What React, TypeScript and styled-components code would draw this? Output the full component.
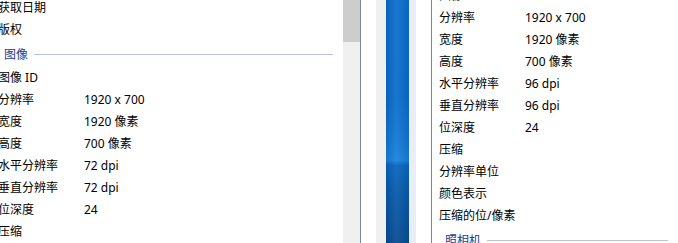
import React from "react";
import styled, { createGlobalStyle } from "styled-components";

const Global = createGlobalStyle`
  html, body { margin: 0; padding: 0; background: #ffffff; overflow: hidden; }
  body { font-family: "Noto Sans", "Noto Sans CJK SC", sans-serif; font-size: 12px; color: #000; }
`;

const Screen = styled.div`
  display: flex;
  width: 678px;
  height: 243px;
  overflow: hidden;
  background: #fff;
`;

const Panel = styled.div<{ $w: number; $top: number; $shift: number }>`
  width: ${(p) => p.$w}px;
  flex: none;
  overflow: hidden;
  background: #fff;
  & > div { margin-top: ${(p) => p.$top}px; margin-left: ${(p) => p.$shift}px; }
`;

const List = styled.div`
  display: flex;
  flex-direction: column;
`;

const Row = styled.div`
  display: grid;
  grid-template-columns: 86px 1fr;
  height: 22px;
  align-items: center;
  white-space: nowrap;
  line-height: 22px;
`;

const Header = styled.div`
  display: flex;
  align-items: center;
  height: 26px;
  padding-left: 6px;
  gap: 6px;
  color: #1b3c8f;
  white-space: nowrap;
  &::after {
    content: "";
    flex: 1;
    height: 1px;
    background: #b9c1d6;
    margin-right: 10px;
  }
`;

const Scrollbar = styled.div`
  width: 17px;
  flex: none;
  background: #f0f0f0;
  display: flex;
  flex-direction: column;
`;

const Thumb = styled.div`
  height: 42px;
  background: #cdcdcd;
`;

const Line = styled.div`
  width: 1px;
  flex: none;
  background: #7f8590;
`;

const Strip = styled.div<{ $w: number; $bg: string }>`
  width: ${(p) => p.$w}px;
  flex: none;
  background: ${(p) => p.$bg};
`;

const BlueBar = styled.div`
  width: 23px;
  flex: none;
  background:
    linear-gradient(90deg, rgba(0,40,110,0.18) 0%, rgba(255,255,255,0.06) 45%, rgba(0,40,110,0.15) 100%),
    linear-gradient(180deg, #0d6fce 0%, #0b6dcc 40%, #1278d5 58%, #1a84de 66%, #0866bd 68%, #075aa8 80%, #074c92 100%);
`;

type Item = { k: string; v?: string } | { h: string };

const leftItems: Item[] = [
  { k: "获取日期" },
  { k: "版权" },
  { h: "图像" },
  { k: "图像 ID" },
  { k: "分辨率", v: "1920 x 700" },
  { k: "宽度", v: "1920 像素" },
  { k: "高度", v: "700 像素" },
  { k: "水平分辨率", v: "72 dpi" },
  { k: "垂直分辨率", v: "72 dpi" },
  { k: "位深度", v: "24" },
  { k: "压缩" },
];

const rightItems: Item[] = [
  { k: "图像 ID" },
  { k: "分辨率", v: "1920 x 700" },
  { k: "宽度", v: "1920 像素" },
  { k: "高度", v: "700 像素" },
  { k: "水平分辨率", v: "96 dpi" },
  { k: "垂直分辨率", v: "96 dpi" },
  { k: "位深度", v: "24" },
  { k: "压缩" },
  { k: "分辨率单位" },
  { k: "颜色表示" },
  { k: "压缩的位/像素" },
  { h: "照相机" },
];

function Props({ items }: { items: Item[] }) {
  return (
    <List>
      {items.map((it, i) =>
        "h" in it ? (
          <Header key={i}>{it.h}</Header>
        ) : (
          <Row key={i}>
            <span>{it.k}</span>
            <span>{it.v ?? ""}</span>
          </Row>
        )
      )}
    </List>
  );
}

export default function App() {
  return (
    <>
      <Global />
      <Screen>
        <Panel $w={343} $top={-3} $shift={-2}>
          <Props items={leftItems} />
        </Panel>
        <Scrollbar>
          <Thumb />
        </Scrollbar>
        <Line />
        <Strip $w={15} $bg="#ffffff" />
        <Strip $w={10} $bg="#f0f0f0" />
        <BlueBar />
        <Strip $w={7} $bg="#e9eef4" />
        <Strip $w={15} $bg="#ffffff" />
        <Line />
        <Panel $w={246} $top={-15} $shift={7}>
          <Props items={rightItems} />
        </Panel>
      </Screen>
    </>
  );
}
